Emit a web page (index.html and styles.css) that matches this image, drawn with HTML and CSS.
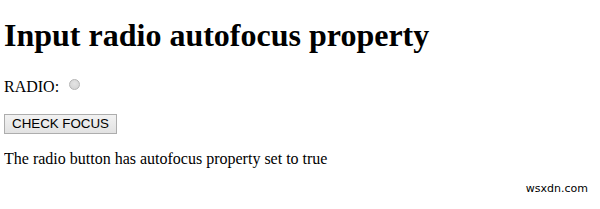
FILE: index.html
```html
<!DOCTYPE html>
<html lang="en">
<head>
    <meta charset="UTF-8">
    <title>Input radio autofocus property</title>
    <link rel="stylesheet" href="styles.css">
</head>
<body>
    <h1>Input radio autofocus property</h1>
    <p class="field">RADIO: <input type="radio" id="RADIO1" class="radio" autofocus></p>
    <button type="button" class="check-btn">CHECK FOCUS</button>
    <p class="sample">The radio button has autofocus property set to true</p>
    <div class="mark">wsxdn.com</div>
</body>
</html>
```

FILE: styles.css
```css
body {
    margin: 4px;
    font-family: "Liberation Serif", serif;
    font-size: 16px;
    color: #000;
    background: #fff;
}
h1 {
    font-size: 32px;
    margin: 13px 0 24px;
}
.field {
    margin: 0 0 18px;
}
.radio {
    appearance: none;
    -webkit-appearance: none;
    width: 11px;
    height: 11px;
    margin: 0 0 2px 6px;
    border: 1px solid #b4b4b4;
    border-radius: 50%;
    background: radial-gradient(circle at 50% 40%, #e4e4e4, #d0d0d0);
    vertical-align: baseline;
    outline: none;
}
.check-btn {
    font-family: "Liberation Sans", Arial, sans-serif;
    font-size: 13.33px;
    color: #000;
    padding: 1px 7px 2px;
    border: 1px solid #adadad;
    border-radius: 0;
    background: linear-gradient(#f2f2f2, #e2e2e2);
}
.sample {
    margin: 16px 0 0;
}
.mark {
    text-align: right;
    padding-right: 8px;
    font-family: "DejaVu Sans", sans-serif;
    font-size: 11px;
    margin-top: 14px;
}
```
